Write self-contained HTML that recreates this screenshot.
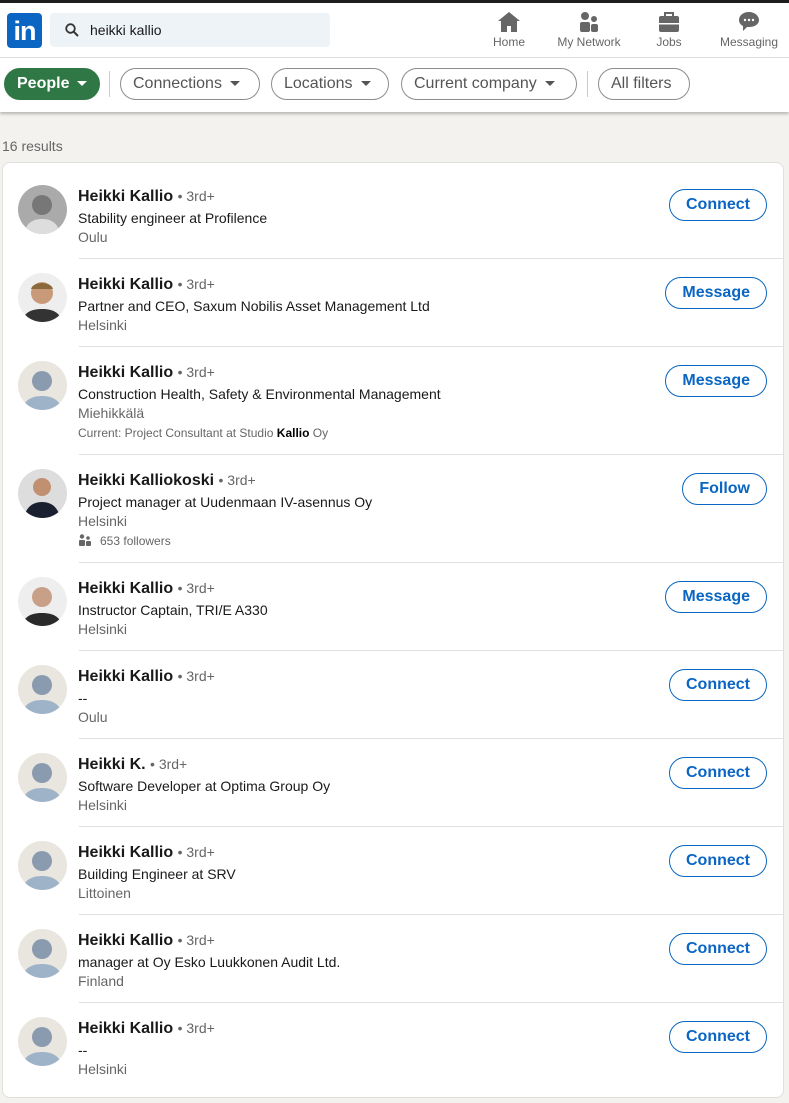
<!DOCTYPE html>
<html><head><meta charset="utf-8"><style>
*{margin:0;padding:0;box-sizing:border-box}
body{width:789px;height:1103px;background:#f3f2ef;font-family:"Liberation Sans",sans-serif;position:relative;overflow:hidden;color:rgba(0,0,0,.9)}
.top{position:absolute;left:0;top:0;width:789px;height:3px;background:#1d1d1d}
.hdr{position:absolute;top:3px;left:0;width:789px;height:55px;background:#fff;border-bottom:1px solid #e0e0e0}
.logo{position:absolute;left:7px;top:10px;width:35px;height:35px;background:#0a66c2;border-radius:4px;color:#fff;font-weight:bold;font-size:27px;line-height:37px;text-align:center;letter-spacing:-1px}
.search{position:absolute;left:50px;top:10px;width:280px;height:34px;background:#eef3f8;border-radius:4px;font-size:14px;line-height:34px;padding-left:40px}
.nav{position:absolute;top:8px;font-size:12px;color:#666;text-align:center;white-space:nowrap}
.nav svg{display:block;margin:0 auto 2px}
.fbar{position:absolute;top:58px;left:0;width:789px;height:54px;background:#fff;box-shadow:0 2px 3px rgba(0,0,0,.25)}
.pill{position:absolute;top:10px;height:32px;border:1px solid #8c8c8c;border-radius:16px;font-size:16px;line-height:30px;color:#555;padding:0 16px 0 12px;white-space:nowrap}
.pill.g{background:#2f7745;border-color:#2f7745;color:#fff;font-weight:bold;padding:0 12px}
.tri{display:inline-block;width:0;height:0;border-left:5px solid transparent;border-right:5px solid transparent;border-top:5px solid currentColor;vertical-align:middle;margin-left:8px}
.sep{position:absolute;top:13px;width:1px;height:26px;background:#ccc}
.res{position:absolute;left:2px;top:138px;font-size:14px;color:#666}
.card{position:absolute;left:2px;top:162px;width:782px;height:936px;background:#fff;border-radius:8px;border:1px solid #e0dfdc}
.row{position:absolute;left:0;width:782px;height:88px}
.av{position:absolute;left:15px;top:15px;width:49px;height:49px;border-radius:50%;background:#e9e5df;overflow:hidden}
.nm{position:absolute;left:75px;top:18px;font-size:16px;font-weight:bold;white-space:nowrap}
.nm span{font-weight:normal;font-size:14px;color:#666}
.l2{position:absolute;left:75px;top:40px;font-size:14px;white-space:nowrap}
.l3{position:absolute;left:75px;top:59px;font-size:14px;color:#666}
.l4{position:absolute;left:75px;top:80px;font-size:12px;color:#666;white-space:nowrap}
.btn{position:absolute;top:19px;right:18px;height:32px;border:1px solid #0a66c2;border-radius:16px;color:#0a66c2;font-weight:bold;font-size:16px;line-height:30px;padding:0 16px}
.div{position:absolute;left:76px;right:0;height:1px;background:#e0e0e0}
</style></head><body>
<div class="top"></div>
<div class="hdr">
<div class="logo">in</div>
<div class="search"><svg style="position:absolute;left:15px;top:10px" width="14" height="14" viewBox="0 0 14 14"><circle cx="5.5" cy="5.5" r="4.3" stroke="#333" stroke-width="1.8" fill="none"/><path d="M8.7 8.7L13 13" stroke="#333" stroke-width="2"/></svg>heikki kallio</div>
<div class="nav" style="left:490px;width:38px"><svg width="24" height="22" viewBox="0 0 24 22"><path d="M12 1L1 10h3v11h6v-6h4v6h6V10h3z" fill="#666"/></svg>Home</div>
<div class="nav" style="left:553px;width:72px"><svg width="24" height="22" viewBox="0 0 24 22"><circle cx="8" cy="5" r="4" fill="#666"/><rect x="3" y="11" width="10" height="10" rx="2" fill="#666"/><circle cx="17" cy="8" r="3" fill="#666"/><rect x="14" y="13" width="7" height="8" rx="2" fill="#666"/></svg>My Network</div>
<div class="nav" style="left:654px;width:30px"><svg width="24" height="22" viewBox="0 0 24 22"><rect x="2" y="5" width="20" height="16" rx="2" fill="#666"/><path d="M8 5V2h8v3" stroke="#666" stroke-width="2" fill="none"/><rect x="2" y="12" width="20" height="1.5" fill="#fff"/></svg>Jobs</div>
<div class="nav" style="left:717px;width:64px"><svg width="24" height="22" viewBox="0 0 24 22"><path d="M12 1C6 1 2 4.5 2 9c0 3 2 5 4 6v5l4-4h2c6 0 10-3 10-7s-4-8-10-8z" fill="#666"/><circle cx="8" cy="9" r="1.2" fill="#fff"/><circle cx="12" cy="9" r="1.2" fill="#fff"/><circle cx="16" cy="9" r="1.2" fill="#fff"/></svg>Messaging</div>
</div>
<div class="fbar">
<div class="pill g" style="left:4px">People<span class="tri"></span></div>
<div class="sep" style="left:109px"></div>
<div class="pill" style="left:120px;width:140px">Connections<span class="tri"></span></div>
<div class="pill" style="left:271px;width:118px">Locations<span class="tri"></span></div>
<div class="pill" style="left:401px;width:176px">Current company<span class="tri"></span></div>
<div class="sep" style="left:587px"></div>
<div class="pill" style="left:598px;width:92px">All filters</div>
</div>
<div class="res">16 results</div>
<div class="card">
<div class="row" style="top:7px"><div class="av" style="background:#aaa"><svg width="49" height="49"><circle cx="24" cy="20" r="10" fill="#777"/><path d="M6 49c2-12 10-15 18-15s16 3 18 15z" fill="#ddd"/></svg></div><div class="nm">Heikki Kallio <span>• 3rd+</span></div><div class="l2">Stability engineer at Profilence</div><div class="l3">Oulu</div><div class="btn">Connect</div></div>
<div class="div" style="top:95px"></div>
<div class="row" style="top:95px"><div class="av" style="background:#eee"><svg width="49" height="49"><circle cx="24" cy="20" r="11" fill="#c99a7a"/><path d="M13 16c2-8 20-8 22 0" fill="#8a6a3a"/><path d="M4 49c2-10 10-13 20-13s18 3 20 13z" fill="#333"/></svg></div><div class="nm">Heikki Kallio <span>• 3rd+</span></div><div class="l2">Partner and CEO, Saxum Nobilis Asset Management Ltd</div><div class="l3">Helsinki</div><div class="btn">Message</div></div>
<div class="div" style="top:183px"></div>
<div class="row" style="top:183px"><div class="av"><svg width="49" height="49"><circle cx="24" cy="20" r="10" fill="#8a9bb0"/><path d="M4 49c2-10 10-14 20-14s18 4 20 14z" fill="#9fb3c8"/></svg></div><div class="nm">Heikki Kallio <span>• 3rd+</span></div><div class="l2">Construction Health, Safety &amp; Environmental Management</div><div class="l3">Miehikkälä</div><div class="l4">Current: Project Consultant at Studio <b style="color:#000">Kallio</b> Oy</div><div class="btn">Message</div></div>
<div class="div" style="top:291px"></div>
<div class="row" style="top:291px"><div class="av" style="background:#ddd"><svg width="49" height="49"><circle cx="24" cy="18" r="9" fill="#c09070"/><path d="M6 49c2-12 10-16 18-16s16 4 18 16z" fill="#1a2030"/></svg></div><div class="nm">Heikki Kalliokoski <span>• 3rd+</span></div><div class="l2">Project manager at Uudenmaan IV-asennus Oy</div><div class="l3">Helsinki</div><div class="l4"><svg width="14" height="12" viewBox="0 0 14 12" style="vertical-align:-1px;margin-right:8px"><circle cx="4" cy="2.5" r="2.2" fill="#666"/><rect x="1" y="6" width="6" height="6" rx="1" fill="#666"/><circle cx="10" cy="4" r="1.8" fill="#666"/><rect x="8" y="7" width="5" height="5" rx="1" fill="#666"/></svg>653 followers</div><div class="btn">Follow</div></div>
<div class="div" style="top:399px"></div>
<div class="row" style="top:399px"><div class="av" style="background:#eee"><svg width="49" height="49"><circle cx="24" cy="20" r="10" fill="#c8a088"/><path d="M4 49c2-10 10-13 20-13s18 3 20 13z" fill="#2a2a2a"/></svg></div><div class="nm">Heikki Kallio <span>• 3rd+</span></div><div class="l2">Instructor Captain, TRI/E A330</div><div class="l3">Helsinki</div><div class="btn">Message</div></div>
<div class="div" style="top:487px"></div>
<div class="row" style="top:487px"><div class="av"><svg width="49" height="49"><circle cx="24" cy="20" r="10" fill="#8a9bb0"/><path d="M4 49c2-10 10-14 20-14s18 4 20 14z" fill="#9fb3c8"/></svg></div><div class="nm">Heikki Kallio <span>• 3rd+</span></div><div class="l2">--</div><div class="l3">Oulu</div><div class="btn">Connect</div></div>
<div class="div" style="top:575px"></div>
<div class="row" style="top:575px"><div class="av"><svg width="49" height="49"><circle cx="24" cy="20" r="10" fill="#8a9bb0"/><path d="M4 49c2-10 10-14 20-14s18 4 20 14z" fill="#9fb3c8"/></svg></div><div class="nm">Heikki K. <span>• 3rd+</span></div><div class="l2">Software Developer at Optima Group Oy</div><div class="l3">Helsinki</div><div class="btn">Connect</div></div>
<div class="div" style="top:663px"></div>
<div class="row" style="top:663px"><div class="av"><svg width="49" height="49"><circle cx="24" cy="20" r="10" fill="#8a9bb0"/><path d="M4 49c2-10 10-14 20-14s18 4 20 14z" fill="#9fb3c8"/></svg></div><div class="nm">Heikki Kallio <span>• 3rd+</span></div><div class="l2">Building Engineer at SRV</div><div class="l3">Littoinen</div><div class="btn">Connect</div></div>
<div class="div" style="top:751px"></div>
<div class="row" style="top:751px"><div class="av"><svg width="49" height="49"><circle cx="24" cy="20" r="10" fill="#8a9bb0"/><path d="M4 49c2-10 10-14 20-14s18 4 20 14z" fill="#9fb3c8"/></svg></div><div class="nm">Heikki Kallio <span>• 3rd+</span></div><div class="l2">manager at Oy Esko Luukkonen Audit Ltd.</div><div class="l3">Finland</div><div class="btn">Connect</div></div>
<div class="div" style="top:839px"></div>
<div class="row" style="top:839px"><div class="av"><svg width="49" height="49"><circle cx="24" cy="20" r="10" fill="#8a9bb0"/><path d="M4 49c2-10 10-14 20-14s18 4 20 14z" fill="#9fb3c8"/></svg></div><div class="nm">Heikki Kallio <span>• 3rd+</span></div><div class="l2">--</div><div class="l3">Helsinki</div><div class="btn">Connect</div></div>
</div>
</body></html>
